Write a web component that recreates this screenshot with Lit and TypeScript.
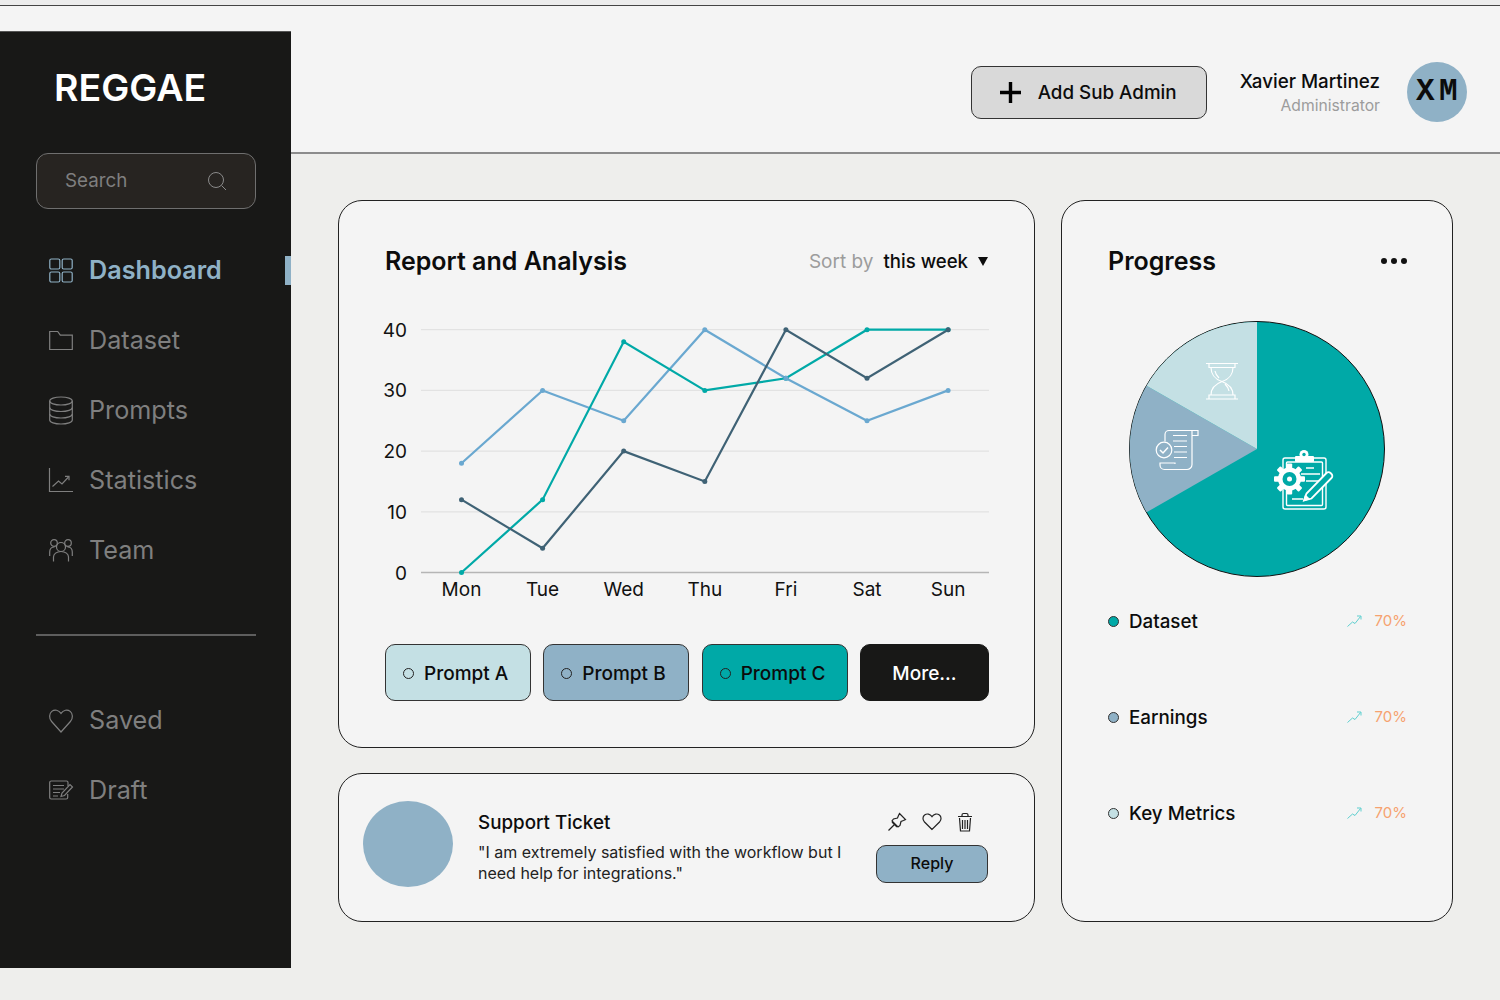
import {LitElement, css, html, svg} from 'lit'
import {customElement} from 'lit/decorators.js'

const days = ['Mon', 'Tue', 'Wed', 'Thu', 'Fri', 'Sat', 'Sun']
const ticks = [0, 10, 20, 30, 40]
const series = [
  {color: '#6aa8d0', values: [18, 30, 25, 40, 32, 25, 30]},
  {color: '#00a9a7', values: [0, 12, 38, 30, 32, 40, 40]},
  {color: '#3f6275', values: [12, 4, 20, 15, 40, 32, 40]},
]
const dotOrder = [series[1], series[0], series[2]]

// chart coords are relative to the card's inner left edge (x=385 on the page) and y=310
const px = (i: number) => 76.5 + i * 81.1
const py = (v: number) => 262.5 - v * 6.07

const icons: Record<string, unknown> = {
  grid: svg`<rect x="0.8" y="1" width="10" height="10" rx="1.5"/><rect x="13.2" y="1" width="10" height="10" rx="1.5"/><rect x="0.8" y="14" width="10" height="10" rx="1.5"/><rect x="13.2" y="14" width="10" height="10" rx="1.5"/>`,
  folder: svg`<path d="M0.7 3.5h8l2.600 3.600h12v14.400H0.700z"/>`,
  db: svg`<ellipse cx="12" cy="3" rx="11.300" ry="4"/><path d="M0.700 3v19c0 2.200 5 4 11.300 4s11.300-1.800 11.300-4V3"/><path d="M0.700 9.500c0 2.200 5 4 11.300 4s11.300-1.800 11.300-4M0.700 16c0 2.200 5 4 11.300 4s11.300-1.800 11.300-4"/>`,
  stats: svg`<path d="M0.500 0v23.500H24"/><path d="M3.500 18.500l6-5.500 3.500 3 6.500-7"/><path d="M16 8.300h4v4"/>`,
  team: svg`<circle cx="12" cy="9" r="4.500"/><circle cx="5" cy="5" r="3.300"/><circle cx="19" cy="5" r="3.300"/><path d="M4.500 23.500V19c0-3 3-5.500 7.500-5.500s7.500 2.500 7.500 5.500v4.500"/><path d="M0.700 18v-4c0-3 2-5 4.800-5M23.300 18v-4c0-3-2-5-4.800-5"/>`,
  heart: svg`<path d="M12 24L2.600 13.500C-0.300 10.200 0.200 5.500 2.800 3.400c2.900-2.300 6.800-1.500 9.200 2 2.400-3.500 6.300-4.300 9.200-2 2.600 2.100 3.100 6.800 0.200 10.100z"/>`,
  draft: svg`<path d="M19 8V4.500a1.500 1.500 0 0 0-1.500-1.500H2.200A1.500 1.500 0 0 0 0.700 4.500v15A1.500 1.500 0 0 0 2.200 21h15a1.500 1.500 0 0 0 1.500-1.500V16"/><path d="M4 7.500h11M4 11h11M4 14.500h7M4 18h5"/><path d="M12 18.500l1-3.500 8-8.500 2.500 2.500-8 8.500z"/>`,
}

const navTop = [
  {icon: 'grid', label: 'Dashboard', active: true},
  {icon: 'folder', label: 'Dataset'},
  {icon: 'db', label: 'Prompts'},
  {icon: 'stats', label: 'Statistics'},
  {icon: 'team', label: 'Team'},
]
const navBottom = [
  {icon: 'heart', label: 'Saved'},
  {icon: 'draft', label: 'Draft'},
]

const legend = [
  {label: 'Dataset', color: '#00a9a7'},
  {label: 'Earnings', color: '#8fb1c6'},
  {label: 'Key Metrics', color: '#c4e0e4'},
]

const prompts = [
  {label: 'Prompt A', cls: 'a'},
  {label: 'Prompt B', cls: 'b'},
  {label: 'Prompt C', cls: 'c'},
]

@customElement('app-root')
export class AppRoot extends LitElement {
  static styles = css`
    :host {
      display: block;
      width: 1500px;
      height: 1000px;
      overflow: hidden;
      background: #eeeeec;
      font-family: Inter, "Liberation Sans", sans-serif;
      color: #0c0c0c;
    }

    .strip {
      height: 5px;
      background: #ececec;
      border-bottom: 1px solid #444;
    }

    .frame {
      display: grid;
      grid-template-columns: 291px 1fr;
    }

    .rail-top {
      height: 25px;
      background: #f4f4f4;
    }

    .sidebar {
      height: 937px;
      background: #181817;
      box-sizing: border-box;
      border-top: 1px solid #555;
    }

    .logo {
      margin: 34px 0 0 54px;
      font-size: 37.5px;
      line-height: 44px;
      font-weight: 600;
      color: #fff;
    }

    .search {
      display: flex;
      align-items: center;
      justify-content: space-between;
      box-sizing: border-box;
      width: 220px;
      height: 56px;
      margin: 43px 0 26px 36px;
      padding: 0 28px 0 28px;
      background: #272421;
      border: 1px solid #6f6f6f;
      border-radius: 12px;
      font-size: 18.8px;
      color: #7f7f7f;
    }

    .search span {
      margin-top: -2px;
    }

    .search svg {
      width: 20px;
      height: 20px;
      fill: none;
      stroke: #8a8a8a;
      stroke-width: 1;
    }

    .nav-item {
      position: relative;
      display: flex;
      align-items: center;
      gap: 16px;
      height: 70px;
      padding-left: 49px;
      font-size: 25.2px;
      color: #7f7f7f;
    }

    .nav-item span {
      margin-top: -1px;
    }

    .nav-item svg {
      width: 24px;
      height: 28px;
      margin-top: 3px;
      overflow: visible;
      fill: none;
      stroke: currentColor;
      stroke-width: 1.2;
    }

    .nav-item.active {
      color: #8fb1c6;
      font-weight: 600;
    }

    .nav-item.active::after {
      content: "";
      position: absolute;
      right: 0;
      top: 21px;
      width: 6px;
      height: 29px;
      background: #8fb1c6;
    }

    .divider {
      width: 220px;
      height: 2px;
      margin: 49px 0 49px 36px;
      background: #5e5e5e;
    }

    .header {
      display: flex;
      align-items: center;
      justify-content: flex-end;
      box-sizing: border-box;
      height: 148px;
      padding: 27px 33px 0 0;
      background: #f4f4f4;
      border-bottom: 2px solid #8c8c8c;
    }

    .add {
      display: flex;
      align-items: center;
      gap: 17px;
      box-sizing: border-box;
      width: 236px;
      height: 53px;
      margin-right: 33px;
      padding-left: 28px;
      background: #d9d9d9;
      border: 1px solid #333;
      border-radius: 10px;
      font-size: 18.8px;
      font-weight: 500;
    }

    .add svg {
      width: 21px;
      height: 21px;
      stroke: #000;
      stroke-width: 3.4;
    }

    .user {
      text-align: right;
      margin: 1px 27px 0 0;
    }

    .user-name {
      font-size: 18.8px;
      line-height: 24px;
      font-weight: 500;
    }

    .user-role {
      margin-top: 1px;
      font-size: 15.7px;
      line-height: 22px;
      color: #9c9c9c;
    }

    .avatar {
      display: flex;
      align-items: center;
      justify-content: center;
      width: 60px;
      height: 60px;
      margin-top: -2px;
      border-radius: 50%;
      background: #8fb1c6;
      font-family: "Liberation Mono", monospace;
      font-size: 31px;
      font-weight: 700;
      letter-spacing: 4.4px;
      padding-left: 4px;
      box-sizing: border-box;
    }

    .content {
      display: grid;
      grid-template-columns: 697px 392px;
      gap: 26px;
      padding: 46px 0 0 47px;
    }

    .stack {
      display: flex;
      flex-direction: column;
      gap: 25px;
    }

    .card {
      box-sizing: border-box;
      background: #f4f4f4;
      border: 1px solid #222;
      border-radius: 24px;
    }

    .report {
      height: 548px;
      padding: 45px 45px 0 46px;
    }

    .card-head {
      display: flex;
      align-items: center;
      justify-content: space-between;
      height: 30px;
    }

    .card-title {
      font-size: 25px;
      font-weight: 600;
    }

    .sort {
      display: flex;
      align-items: center;
      margin-right: 1px;
      font-size: 19px;
      color: #9c9c9c;
    }

    .sort b {
      margin-left: 10px;
      font-size: 18.6px;
      font-weight: 500;
      color: #0c0c0c;
    }

    .sort i {
      margin-left: 10px;
      border-left: 5px solid transparent;
      border-right: 5px solid transparent;
      border-top: 9px solid #0c0c0c;
    }

    .chart {
      display: block;
      width: 604px;
      height: 294px;
      margin-top: 34px;
      overflow: visible;
      font-size: 19px;
    }

    .chart text {
      fill: #111;
    }

    .chips {
      display: grid;
      grid-template-columns: 146px 146px 146px 129px;
      justify-content: space-between;
      margin-top: 40px;
    }

    .chip {
      display: flex;
      align-items: center;
      gap: 10px;
      box-sizing: border-box;
      height: 57px;
      padding: 1px 0 0 17px;
      border: 1px solid #333;
      border-radius: 10px;
      font-size: 19px;
      font-weight: 500;
    }

    .chip span {
      box-sizing: border-box;
      width: 11px;
      height: 11px;
      border: 1px solid #222;
      border-radius: 50%;
    }

    .chip.a { background: #c4e0e4; }
    .chip.b { background: #8fb1c6; }
    .chip.c { background: #00a9a7; }

    .chip.more {
      justify-content: center;
      padding: 1px 0 0;
      background: #181817;
      border-color: #181817;
      color: #fff;
    }

    .ticket {
      display: flex;
      align-items: center;
      height: 149px;
      padding: 0 46px 0 24px;
    }

    .blob {
      flex: none;
      width: 90px;
      height: 86px;
      margin-bottom: 8px;
      border-radius: 50%;
      background: #8fb1c6;
    }

    .ticket-body {
      flex: 1;
      margin: 0 0 2px 25px;
    }

    .ticket-title {
      font-size: 18.8px;
      line-height: 26px;
      font-weight: 500;
      margin-bottom: 6px;
    }

    .ticket-text {
      font-size: 16px;
      line-height: 21px;
      color: #222;
    }

    .ticket-side {
      flex: none;
      width: 112px;
    }

    .ticket-actions {
      display: flex;
      justify-content: center;
      gap: 15px;
      margin-bottom: 13px;
    }

    .ticket-actions svg {
      width: 20px;
      height: 20px;
      fill: none;
      stroke: #222;
      stroke-width: 1.2;
    }

    .reply {
      display: flex;
      align-items: center;
      justify-content: center;
      box-sizing: border-box;
      height: 38px;
      padding-bottom: 2px;
      background: #8fb1c6;
      border: 1px solid #333;
      border-radius: 10px;
      font-size: 16px;
      font-weight: 500;
    }

    .progress {
      height: 722px;
      padding: 45px 45px 0 46px;
    }

    .more-dots {
      display: block;
      width: 26px;
      height: 6px;
      fill: #111;
    }

    .pie {
      display: block;
      width: 258px;
      height: 258px;
      margin: 44px 0 0 20px;
    }

    .legend {
      display: flex;
      flex-direction: column;
      gap: 66px;
      margin-top: 28px;
    }

    .row {
      display: flex;
      align-items: center;
      height: 30px;
      font-size: 18.8px;
      font-weight: 500;
    }

    .row-dot {
      box-sizing: border-box;
      width: 11px;
      height: 11px;
      margin-right: 10px;
      border: 1px solid #333;
      border-radius: 50%;
    }

    .row-label {
      flex: 1;
    }

    .row svg {
      width: 15px;
      height: 12px;
      margin-right: 13px;
      fill: none;
      stroke: #5fcfcf;
      stroke-width: 1;
    }

    .row-pct {
      margin-top: -2px;
      font-size: 15px;
      font-weight: 400;
      color: #f6a26f;
    }
  `

  renderNav(item: {icon: string; label: string; active?: boolean}) {
    return html`
      <div class="nav-item ${item.active ? 'active' : ''}">
        <svg viewBox="0 0 24 28">${icons[item.icon]}</svg>
        <span>${item.label}</span>
      </div>
    `
  }

  renderChart() {
    return html`
      <svg class="chart" viewBox="0 0 604 294">
        ${ticks.map(t => svg`
          <line x1="36" x2="604" y1=${py(t)} y2=${py(t)} stroke=${t === 0 ? '#b5b5b5' : '#e2e2e2'} stroke-width="1.3"/>
          <text x="22" y=${py(t) + 7} text-anchor="end">${t}</text>
        `)}
        ${days.map((d, i) => svg`<text x=${px(i)} y="286" text-anchor="middle">${d}</text>`)}
        ${series.map(s => svg`
          <polyline fill="none" stroke=${s.color} stroke-width="2.2"
            points=${s.values.map((v, i) => `${px(i)},${py(v)}`).join(' ')}/>
        `)}
        ${dotOrder.map(s => s.values.map((v, i) => svg`
          <circle cx=${px(i)} cy=${py(v)} r="2.5" fill=${s.color}/>
        `))}
      </svg>
    `
  }

  renderPie() {
    return html`
      <svg class="pie" viewBox="1128 320 258 258">
        <circle cx="1257" cy="449" r="127.500" fill="#00a9a7" stroke="#111" stroke-width="1"/>
        <path d="M1257 449L1146.600 512.300A127 127 0 0 1 1146.600 385.700Z" fill="#8fb1c6"/>
        <path d="M1257 449L1146.600 385.700A127 127 0 0 1 1257 322Z" fill="#c4e0e4"/>

        <g fill="none" stroke="#fff" stroke-width="1.2">
          <path d="M1206 363.500h32M1206 399h32M1209 363.500v4h26v-4M1209 399v-4h26v4"/>
          <path d="M1211 367.500c0 7 3 11 11 14 8 3 11 7 11 13.500M1233 367.500c0 7-3 11-11 14-8 3-11 7-11 13.500"/>
          <path d="M1215 371c.5 3 2 5 4 7M1229 391c-.5-3-2-5-4-7"/>
        </g>

        <g fill="none" stroke="#fff" stroke-width="1.2">
          <path d="M1198 430.500h-29a4 4 0 0 0-4 4v7M1192 430.500v5h6v-5zM1192 435.500v29a5 5 0 0 1-5 5h-21"/>
          <path d="M1175 464v-1h-15v2a4.500 4.500 0 0 0 4.500 4.500h22.500"/>
          <circle cx="1164" cy="450" r="7.800"/>
          <path d="M1160 450l3 3 5-5.500" stroke-width="1.5"/>
          <path d="M1173 435.500h14M1173 441h14M1174 446.500h13M1174 452h13M1174 457.500h13"/>
        </g>

        <g transform="translate(1 0)">
          <g fill="none" stroke="#fff" stroke-width="1.4">
            <rect x="1282" y="458" width="43" height="51" rx="2"/>
            <rect x="1285.500" y="462" width="36" height="43.500" rx="1"/>
            <path d="M1305 468h8M1300 474h19M1305 481h15M1291 499h11"/>
            <path d="M1303 500.500l2.500-7 20-20.500a2.800 2.800 0 0 1 4 0l1 1a2.800 2.800 0 0 1 0 4l-20 20.500z" fill="#00a9a7" stroke-width="1.8"/>
            <path d="M1303 500.500l1.500-5 3.500 3.500z" fill="#fff"/>
          </g>
          <g fill="#fff">
            <rect x="1294" y="456" width="19" height="6" rx="1"/>
            <circle cx="1303" cy="454.500" r="4.500"/>
            <circle cx="1303" cy="454.500" r="1.700" fill="#00a9a7"/>
            <circle cx="1288.500" cy="479" r="11.500"/>
            ${[0, 45, 90, 135, 180, 225, 270, 315].map(a => svg`
              <rect x="1285.800" y="463.500" width="5.400" height="6" rx="1" transform="rotate(${a} 1288.500 479)"/>
            `)}
            <circle cx="1288.500" cy="479" r="7" fill="#00a9a7"/>
            <circle cx="1288.500" cy="479" r="2.500"/>
          </g>
        </g>
      </svg>
    `
  }

  render() {
    return html`
      <div class="strip"></div>
      <div class="frame">
        <div>
          <div class="rail-top"></div>
          <aside class="sidebar">
            <div class="logo">REGGAE</div>
            <div class="search">
              <span>Search</span>
              <svg viewBox="0 0 20 20"><circle cx="9" cy="9" r="7.500"/><path d="M14.500 14.500L19 19"/></svg>
            </div>
            ${navTop.map(n => this.renderNav(n))}
            <div class="divider"></div>
            ${navBottom.map(n => this.renderNav(n))}
          </aside>
        </div>

        <div>
          <header class="header">
            <div class="add">
              <svg viewBox="0 0 21 21"><path d="M0 10.500h21M10.500 0v21"/></svg>
              <span>Add Sub Admin</span>
            </div>
            <div class="user">
              <div class="user-name">Xavier Martinez</div>
              <div class="user-role">Administrator</div>
            </div>
            <div class="avatar">XM</div>
          </header>

          <main class="content">
            <div class="stack">
              <section class="card report">
                <div class="card-head">
                  <div class="card-title">Report and Analysis</div>
                  <div class="sort">Sort by <b>this week</b><i></i></div>
                </div>
                ${this.renderChart()}
                <div class="chips">
                  ${prompts.map(p => html`<div class="chip ${p.cls}"><span></span>${p.label}</div>`)}
                  <div class="chip more">More...</div>
                </div>
              </section>

              <section class="card ticket">
                <div class="blob"></div>
                <div class="ticket-body">
                  <div class="ticket-title">Support Ticket</div>
                  <div class="ticket-text">"I am extremely satisfied with the workflow but I<br>need help for integrations."</div>
                </div>
                <div class="ticket-side">
                  <div class="ticket-actions">
                    <svg viewBox="0 0 20 20">
                      <path d="M12.500 1.500l6 6-2 1-2.500 1-1 4-2 1.500-6-6 1.500-2 4-1 1-2.500z"/>
                      <path d="M7.500 12.500L1.500 18.500"/>
                      <path d="M5 10l5 5"/>
                    </svg>
                    <svg viewBox="0 0 20 20"><path d="M10 17.500L2.500 10C.3 7.700.6 4.500 2.600 3 4.900 1.300 8 1.800 10 4.600 12 1.800 15.100 1.300 17.400 3c2 1.500 2.300 4.700.1 7z"/></svg>
                    <svg viewBox="0 0 20 20">
                      <path d="M1 4.500h14M5 4.500V3q0-1.500 1.500-1.500h3Q11 1.500 11 3v1.500M2.500 6l1 13h9l1-13M5.500 8v9M8 8v9M10.500 8v9"/>
                    </svg>
                  </div>
                  <div class="reply">Reply</div>
                </div>
              </section>
            </div>

            <section class="card progress">
              <div class="card-head">
                <div class="card-title">Progress</div>
                <svg class="more-dots" viewBox="0 0 26 6"><circle cx="3" cy="3" r="3"/><circle cx="13" cy="3" r="3"/><circle cx="23" cy="3" r="3"/></svg>
              </div>
              ${this.renderPie()}
              <div class="legend">
                ${legend.map(l => html`
                  <div class="row">
                    <span class="row-dot" style="background: ${l.color}"></span>
                    <span class="row-label">${l.label}</span>
                    <svg viewBox="0 0 15 12"><path d="M0.500 11.500l5-4.500 2.500 1.500 5.500-7M10 1h4v3.500"/></svg>
                    <span class="row-pct">70%</span>
                  </div>
                `)}
              </div>
            </section>
          </main>
        </div>
      </div>
    `
  }
}
